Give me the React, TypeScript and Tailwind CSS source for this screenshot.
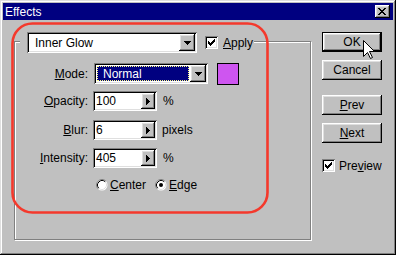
import React from "react";

const raised =
  "shadow-[inset_-1px_-1px_#000,inset_1px_1px_#fff,inset_-2px_-2px_#808080,inset_2px_2px_#dfdfdf]";
const sunken =
  "shadow-[inset_1px_1px_#808080,inset_-1px_-1px_#fff,inset_2px_2px_#000,inset_-2px_-2px_#dfdfdf]";

function U({ children }: { children: React.ReactNode }) {
  return <span className="underline decoration-1 underline-offset-[1px]">{children}</span>;
}

function DownTri() {
  return (
    <svg width="7" height="4" viewBox="0 0 7 4" shapeRendering="crispEdges">
      <path d="M0 0h7v1H0z M1 1h5v1H1z M2 2h3v1H2z M3 3h1v1H3z" fill="#000" />
    </svg>
  );
}

function RightTri() {
  return (
    <svg width="4" height="7" viewBox="0 0 4 7" shapeRendering="crispEdges">
      <path d="M0 0h1v7H0z M1 1h1v5H1z M2 2h1v3H2z M3 3h1v1H3z" fill="#000" />
    </svg>
  );
}

function Check() {
  return (
    <svg width="7" height="7" viewBox="0 0 7 7" shapeRendering="crispEdges">
      <path
        d="M6 0h1v1H6z M5 1h2v1H5z M0 2h1v1H0z M4 2h3v1H4z M0 3h2v1H0z M3 3h3v1H3z M0 4h5v1H0z M1 5h3v1H1z M2 6h1v1H2z"
        fill="#000"
      />
    </svg>
  );
}

function Checkbox() {
  return (
    <div className={`w-[13px] h-[13px] bg-white flex items-center justify-center shrink-0 ${sunken}`}>
      <Check />
    </div>
  );
}

function Radio({ checked }: { checked?: boolean }) {
  return (
    <svg width="12" height="12" viewBox="0 0 12 12" className="shrink-0">
      <circle cx="6" cy="6" r="5.5" fill="#fff" />
      <path d="M2.11 9.89 A5.5 5.5 0 0 1 9.89 2.11" fill="none" stroke="#808080" strokeWidth="1" />
      <path d="M2.82 9.18 A4.5 4.5 0 0 1 9.18 2.82" fill="none" stroke="#000" strokeWidth="1" />
      <path d="M9.18 2.82 A4.5 4.5 0 0 1 2.82 9.18" fill="none" stroke="#dfdfdf" strokeWidth="1" />
      {checked && <circle cx="6" cy="6" r="2" fill="#000" />}
    </svg>
  );
}

function CloseButton() {
  return (
    <div className={`w-[15px] h-[13px] bg-[#c0c0c0] flex items-center justify-center ${raised}`}>
      <svg width="8" height="7" viewBox="0 0 8 7" shapeRendering="crispEdges" className="mt-[-1px] ml-[-1px]">
        <path
          d="M0 0h2v1H0z M6 0h2v1H6z M1 1h2v1H1z M5 1h2v1H5z M2 2h4v1H2z M3 3h2v1H3z M2 4h4v1H2z M1 5h2v1H1z M5 5h2v1H5z M0 6h2v1H0z M6 6h2v1H6z"
          fill="#000"
        />
      </svg>
    </div>
  );
}

function Spin({ value }: { value: string }) {
  return (
    <div className={`w-[64px] h-[20px] bg-white p-[2px] flex ${sunken}`}>
      <div className="flex-1 flex items-center pl-[1px]">{value}</div>
      <div className={`w-[14px] h-full bg-[#c0c0c0] flex items-center justify-center ${raised}`}>
        <RightTri />
      </div>
    </div>
  );
}

function Button({ children, def }: { children: React.ReactNode; def?: boolean }) {
  if (def) {
    return (
      <div className="w-[60px] h-[20px] border border-black">
        <div className={`w-full h-full bg-[#c0c0c0] flex items-center justify-center ${raised}`}>
          {children}
        </div>
      </div>
    );
  }
  return (
    <div className={`w-[60px] h-[20px] bg-[#c0c0c0] flex items-center justify-center ${raised}`}>
      {children}
    </div>
  );
}

function GroupBox() {
  return (
    <div className="relative mt-[21px] w-[297px] h-[199px] border border-[#808080] shadow-[inset_1px_1px_#fff,1px_1px_#fff]">
      {/* legend */}
      <div className="absolute left-[5px] top-[-10px] flex items-center bg-[#c0c0c0] pl-[7px] pr-[1px]">
        <div className={`w-[170px] h-[21px] bg-white p-[2px] flex ${sunken}`}>
          <div className="flex-1 flex items-center pl-[6px]">Inner Glow</div>
          <div className={`w-[16px] h-full bg-[#c0c0c0] flex items-center justify-center ${raised}`}>
            <DownTri />
          </div>
        </div>
        <div className="ml-[8px]">
          <Checkbox />
        </div>
        <span className="ml-[5px]">
          <U>A</U>pply
        </span>
      </div>

      <div className="flex flex-col pt-[21px]">
        {/* Mode */}
        <div className="flex items-center h-[21px]">
          <div className="w-[73px] text-right">
            <U>M</U>ode:
          </div>
          <div className={`ml-[6px] w-[114px] h-[21px] bg-white p-[2px] flex ${sunken}`}>
            <div className="flex-1 p-[1px] flex">
              <div className="flex-1 bg-[#000080] border border-dotted border-[#ffff80] text-white flex items-center pl-[5px]">
                Normal
              </div>
            </div>
            <div className={`w-[16px] h-full bg-[#c0c0c0] flex items-center justify-center ${raised}`}>
              <DownTri />
            </div>
          </div>
          <div className="ml-[9px] w-[22px] h-[22px] bg-[#ce55f0] border border-black" />
        </div>

        {/* Opacity */}
        <div className="flex items-center h-[20px] mt-[7px]">
          <div className="w-[73px] text-right">
            <U>O</U>pacity:
          </div>
          <div className="ml-[5px]">
            <Spin value="100" />
          </div>
          <span className="ml-[6px]">%</span>
        </div>

        {/* Blur */}
        <div className="flex items-center h-[20px] mt-[9px]">
          <div className="w-[73px] text-right">
            <U>B</U>lur:
          </div>
          <div className="ml-[5px]">
            <Spin value="6" />
          </div>
          <span className="ml-[5px]">pixels</span>
        </div>

        {/* Intensity */}
        <div className="flex items-center h-[20px] mt-[8px]">
          <div className="w-[73px] text-right">
            <U>I</U>ntensity:
          </div>
          <div className="ml-[5px]">
            <Spin value="405" />
          </div>
          <span className="ml-[6px]">%</span>
        </div>

        {/* Radios */}
        <div className="flex items-center h-[13px] mt-[10px] pl-[81px]">
          <Radio />
          <span className="ml-[2px]">
            <U>C</U>enter
          </span>
          <div className="ml-[9px]">
            <Radio checked />
          </div>
          <span className="ml-[2px]">
            <U>E</U>dge
          </span>
        </div>
      </div>
    </div>
  );
}

function RightColumn() {
  return (
    <div className="ml-[11px] mt-[12px] flex flex-col">
      <Button def>OK</Button>
      <div className="mt-[8px]">
        <Button>Cancel</Button>
      </div>
      <div className="mt-[15px]">
        <Button>
          <span>
            <U>P</U>rev
          </span>
        </Button>
      </div>
      <div className="mt-[8px]">
        <Button>
          <span>
            <U>N</U>ext
          </span>
        </Button>
      </div>
      <div className="mt-[16px] flex items-center">
        <Checkbox />
        <span className="ml-[4px]">
          Pre<U>v</U>iew
        </span>
      </div>
    </div>
  );
}

export default function App() {
  return (
    <div className="relative w-[396px] h-[255px] bg-[#c0c0c0] p-[3px] flex flex-col font-['Liberation_Sans',Arial,sans-serif] text-[12px] leading-none text-black shadow-[inset_-1px_-1px_#000,inset_1px_1px_#dfdfdf,inset_-2px_-2px_#808080,inset_2px_2px_#fff] select-none overflow-hidden">
      <div className="h-[17px] bg-[#000080] flex items-center justify-between pl-[2px] pr-[3px] shrink-0">
        <span className="text-white">Effects</span>
        <CloseButton />
      </div>
      <div className="flex items-start pl-[11px]">
        <GroupBox />
        <RightColumn />
      </div>

      {/* red annotation ring */}
      <svg className="absolute left-0 top-0 pointer-events-none" width="396" height="255" viewBox="0 0 396 255">
        <rect x="12.5" y="23.5" width="255" height="189" rx="20" ry="20" fill="none" stroke="#f4392c" strokeWidth="2.6" />
      </svg>

      {/* mouse cursor */}
      <svg className="absolute left-[363px] top-[40px] pointer-events-none" width="13" height="20" viewBox="0 0 13 20">
        <path
          d="M0.5 0.5 L0.5 16.5 L4.5 12.5 L7.5 18.5 L9.5 17.5 L6.5 11.5 L11.5 11.5 Z"
          fill="#fff"
          stroke="#000"
          strokeWidth="1"
          strokeLinejoin="miter"
        />
      </svg>
    </div>
  );
}
